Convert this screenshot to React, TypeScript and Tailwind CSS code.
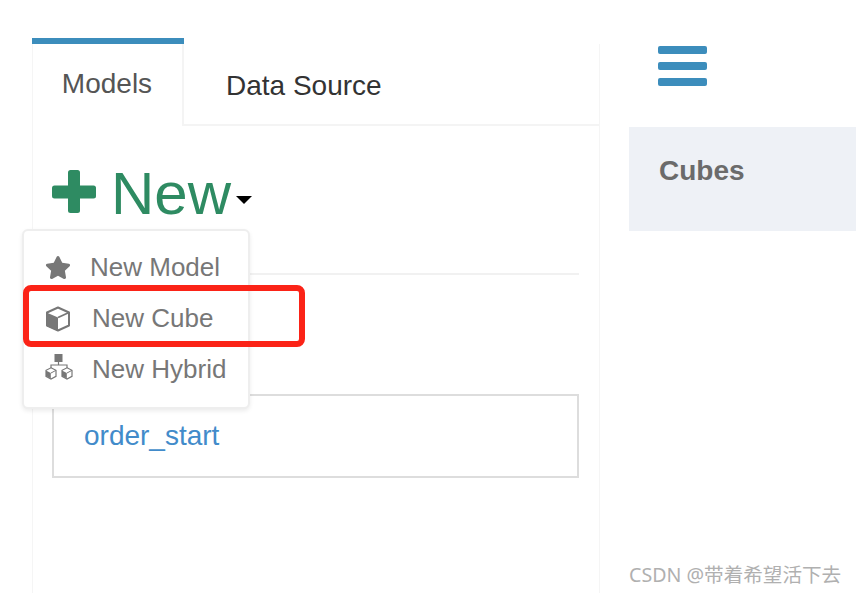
import { FaStar } from "react-icons/fa"

function SmallCube({ x }: { x: number }) {
  return (
    <g transform={`translate(${x} 13)`}>
      <path d="M6 0.8 L11 3.3 V9.3 L6 12 L1 9.3 V3.3 Z" fill="none" stroke="#777" strokeWidth="1.2" />
      <path d="M1 3.6 L5.8 6 V11.6 L1 9.1 Z" fill="#777" />
      <path d="M6 6 L11 3.3" stroke="#777" strokeWidth="1" />
    </g>
  )
}

function HybridIcon() {
  return (
    <svg width="28" height="26" viewBox="0 0 28 26" className="-mt-[5px] shrink-0">
      <rect x="9.5" y="0" width="8" height="8" fill="#777" />
      <path d="M13.5 8 V11.5 M6 14 V11 H22 V14" fill="none" stroke="#777" strokeWidth="1.2" />
      <SmallCube x={0} />
      <SmallCube x={16} />
    </svg>
  )
}

function CubeIcon() {
  return (
    <svg width="26" height="26" viewBox="0 0 26 26" className="shrink-0">
      <path d="M13 1.5 L24 6.5 V19.5 L13 24.5 L2 19.5 V6.5 Z" fill="none" stroke="#777" strokeWidth="2" strokeLinejoin="round" />
      <path d="M1.5 6.5 L13 11.5 V25 L1.5 20 Z" fill="#777" />
      <path d="M13 11.5 L24 6.5" stroke="#777" strokeWidth="1.8" />
    </svg>
  )
}

const menuItems = [
  { label: "New Model", icon: <FaStar className="h-[25px] w-[26px] shrink-0" />, gap: "gap-[19px]", pad: "h-[51px]" },
  { label: "New Cube", icon: <CubeIcon />, gap: "gap-[21px]", pad: "h-[51px]" },
  { label: "New Hybrid", icon: <HybridIcon />, gap: "gap-[19px]", pad: "h-[51px]" },
]

export default function App() {
  return (
    <div className="relative flex h-[593px] w-[856px] overflow-hidden bg-white pl-[32px] font-['Liberation_Sans',sans-serif]">
      {/* Left panel */}
      <div className="mt-[38px] flex h-[555px] w-[568px] flex-col border-l border-[#f5f5f5]">
        {/* Tabs */}
        <div className="flex h-[88px] shrink-0">
          <div className="-ml-px flex w-[152px] flex-col border-r-2 border-[#f4f4f4]">
            <div className="-mr-[2px] h-[6px] shrink-0 bg-[#3c8dbc]" />
            <div className="pt-[20px] text-center text-[28px] leading-[40px] text-[#555]">Models</div>
          </div>
          <div className="mt-[6px] flex-1 border-b-2 border-r border-b-[#f4f4f4] border-r-[#f5f5f5] pl-[42px] pt-[22px] text-[28px] leading-[40px] text-[#333]">
            Data Source
          </div>
        </div>

        {/* Content */}
        <div className="relative flex-1 border-r border-[#f5f5f5] pl-[19px] pr-[20px] pt-[32px]">
          <div className="flex h-[70px] items-center text-[#2e8b62]">
            <svg width="44" height="43" viewBox="0 0 44 43" className="-mt-[4px] shrink-0">
              <rect x="16" y="0" width="12" height="43" rx="2.5" fill="#2e8b62" />
              <rect x="0" y="15.5" width="44" height="13" rx="2.5" fill="#2e8b62" />
            </svg>
            <span className="ml-[15px] translate-y-[1px] text-[60px] leading-[70px]">New</span>
            <span className="ml-[5px] mt-[14px] h-0 w-0 border-x-[8px] border-t-[8px] border-x-transparent border-t-black" />
          </div>
          <div className="mt-[45px] h-[2px] bg-[#f1f1f1]" />
          <div className="mt-[119px] flex h-[84px] items-center border-2 border-[#ddd] pl-[30px] text-[28px] text-[#428bca]">
            order_start
          </div>

          {/* Dropdown menu */}
          <div className="absolute left-[-11px] top-[103px] flex h-[180px] w-[228px] flex-col rounded-[6px] border-2 border-[#eee] bg-white pl-[21px] pt-[11px] text-[26px] text-[#777] shadow-[0_2px_4px_rgba(0,0,0,0.08)]">
            {menuItems.map((item) => (
              <div key={item.label} className={`flex items-center ${item.gap} ${item.pad}`}>
                {item.icon}
                <span>{item.label}</span>
              </div>
            ))}
          </div>
        </div>
      </div>

      {/* Right column */}
      <div className="ml-[29px] flex flex-1 flex-col">
        <div className="flex h-[127px] flex-col gap-[8px] pl-[29px] pt-[46px]">
          <div className="h-[8px] w-[49px] rounded-[2px] bg-[#3c8dbc]" />
          <div className="h-[8px] w-[49px] rounded-[2px] bg-[#3c8dbc]" />
          <div className="h-[8px] w-[49px] rounded-[2px] bg-[#3c8dbc]" />
        </div>
        <div className="h-[104px] bg-[#eef1f6] pl-[30px] pt-[24px] text-[28px] font-bold leading-[40px] text-[#6b6b6b]">
          Cubes
        </div>
      </div>

      {/* Annotation over the menu */}
      <div className="absolute left-[23px] top-[285px] h-[62px] w-[282px] rounded-[8px] border-[6px] border-[#fb2317]" />

      {/* Watermark */}
      <div className="absolute left-[629px] top-[561px] font-['Noto_Sans','Noto_Sans_CJK_SC',sans-serif] text-[19.6px] leading-[28px] text-[#b0b0b0]">
        CSDN @带着希望活下去
      </div>
    </div>
  )
}
